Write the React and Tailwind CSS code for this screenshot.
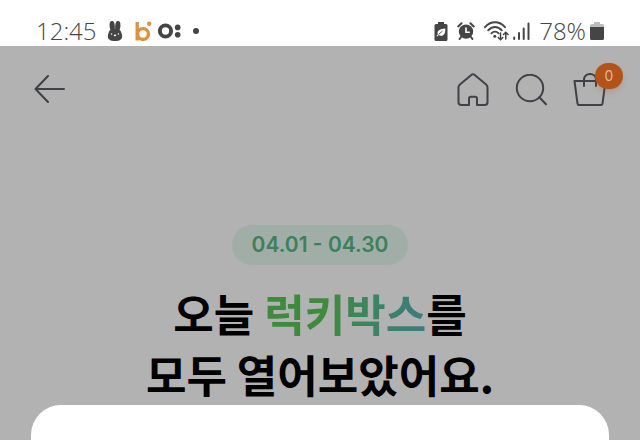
const STROKE = '#3f4145'
const DARK = '#454545'

function RabbitIcon() {
  return (
    <svg width="16" height="20" viewBox="0 0 16 20" fill={DARK} aria-hidden="true">
      <ellipse cx="5.200" cy="5" rx="2.600" ry="5" transform="rotate(-4 5 5)" />
      <ellipse cx="10.800" cy="5" rx="2.600" ry="5" transform="rotate(4 11 5)" />
      <path d="M8 7.500c4 0 6 2 6.400 4.400.3 1 .8 1.700.8 3.300 0 3.200-2.600 4.800-7.200 4.800S.8 18.400.8 15.200c0-1.600.5-2.300.8-3.300C2 9.500 4 7.500 8 7.500Z" />
      <circle cx="4.600" cy="13" r=".7" fill="white" />
      <circle cx="11.400" cy="13" r=".7" fill="white" />
      <ellipse cx="8" cy="14.400" rx="1.200" ry=".8" fill="white" />
    </svg>
  )
}

function BithumbIcon() {
  return (
    <svg width="17" height="20" viewBox="0 0 17 20" fill="none" stroke="#dc9243" aria-hidden="true">
      <path d="M2.200 1v18.500" strokeWidth="3.400" />
      <circle cx="8" cy="13" r="5.400" strokeWidth="3.400" />
      <circle cx="14.200" cy="2.800" r="2.200" fill="#dc9243" stroke="none" />
    </svg>
  )
}

function ColonIcon() {
  return (
    <svg width="23" height="16" viewBox="0 0 23 16" fill={DARK} aria-hidden="true">
      <circle cx="7.500" cy="8" r="5.600" fill="none" stroke={DARK} strokeWidth="3.900" />
      <circle cx="19.700" cy="4.400" r="2.800" />
      <circle cx="19.700" cy="11.800" r="2.800" />
    </svg>
  )
}

function LeafBatteryIcon() {
  return (
    <svg width="14" height="19" viewBox="0 0 14 19" fill={DARK} aria-hidden="true">
      <path d="M4 0h6v2h2a1.500 1.500 0 0 1 1.500 1.500v14A1.500 1.500 0 0 1 12 19H2a1.500 1.500 0 0 1-1.500-1.500v-14A1.500 1.500 0 0 1 2 2h2Z" />
      <path d="M11.300 6.500c.2 4-1 7.300-4.300 7.300-1 0-1.700-.3-2.300-.8l-1.500 1.600-.8-.7 1.500-1.700C2.500 8.700 6 7 11.300 6.500Z" fill="white" />
      <path d="M4.500 12.500 8.500 9" stroke={DARK} strokeWidth=".9" />
    </svg>
  )
}

function AlarmIcon() {
  return (
    <svg width="18" height="18" viewBox="0 0 18 18" fill="none" stroke={DARK} strokeLinecap="round" aria-hidden="true">
      <circle cx="9" cy="9.600" r="7.200" fill={DARK} stroke="none" />
      <path d="M1.200 4.400 4.600 1.200M16.800 4.400 13.400 1.200" strokeWidth="2" />
      <path d="M4 15 2.600 17M14 15l1.400 2" strokeWidth="2" />
      <path d="M9 6v4.300h3.200" stroke="white" strokeWidth="1.600" />
    </svg>
  )
}

function WifiIcon() {
  return (
    <svg width="25" height="20" viewBox="0 0 25 20" fill="none" stroke={DARK} strokeWidth="1.900" strokeLinecap="round" aria-hidden="true">
      <path d="M1 6.200C6.500-.4 15.500-.4 21 6.200" />
      <path d="M4.200 9.300c4-4.400 9.600-4.400 13.600 0" />
      <path d="M7.400 12.300c2.200-2.300 5-2.300 7.200 0" />
      <circle cx="10.800" cy="15.200" r="1.500" fill={DARK} stroke="none" />
      <path d="M16.500 12v6.500M14.200 16.500l2.300 2.300 2.300-2.300" strokeWidth="1.500" />
      <path d="M21.800 18v-6.500M19.500 13.500l2.300-2.300 2.300 2.300" strokeWidth="1.500" />
    </svg>
  )
}

function SignalIcon() {
  return (
    <svg width="17" height="18" viewBox="0 0 17 18" stroke={DARK} strokeWidth="2" strokeLinecap="round" aria-hidden="true">
      <path d="M1.200 15.500V17M6 11v6M10.700 6.500V17M15.500 1.500V17" />
    </svg>
  )
}

function BatteryIcon() {
  return (
    <svg width="14" height="18" viewBox="0 0 14 18" aria-hidden="true">
      <path d="M4 0h6v2h2.500A1.500 1.500 0 0 1 14 3.500V6H0V3.500A1.500 1.500 0 0 1 1.500 2H4Z" fill="#bdbdbd" />
      <path d="M0 5h14v11.500a1.500 1.500 0 0 1-1.500 1.500h-11A1.500 1.500 0 0 1 0 16.500Z" fill={DARK} />
    </svg>
  )
}

function BackIcon() {
  return (
    <svg width="32" height="30" viewBox="0 0 32 30" fill="none" stroke={STROKE} strokeWidth="2" strokeLinecap="round" strokeLinejoin="round" aria-hidden="true">
      <path d="M14 1 1.500 14 14 27M1.500 14H30" />
    </svg>
  )
}

function HomeIcon() {
  return (
    <svg width="32" height="34" viewBox="0 0 32 34" fill="none" stroke={STROKE} strokeWidth="2" strokeLinejoin="round" aria-hidden="true">
      <path d="M14.600 1.800a2.200 2.200 0 0 1 2.800 0l11.700 9.600c.9.800 1.400 1.700 1.400 2.900v14.900a2.800 2.800 0 0 1-2.800 2.800H20v-6.200a2 2 0 0 0-2-2h-4a2 2 0 0 0-2 2V32H4.300a2.800 2.800 0 0 1-2.800-2.800V14.300c0-1.200.5-2.100 1.400-2.900Z" />
    </svg>
  )
}

function SearchIcon() {
  return (
    <svg width="32" height="32" viewBox="0 0 32 32" fill="none" stroke={STROKE} strokeWidth="2" strokeLinecap="round" aria-hidden="true">
      <circle cx="15" cy="14" r="13.200" />
      <path d="m24.300 23.300 6.700 7" />
    </svg>
  )
}

function BagIcon() {
  return (
    <svg width="34" height="34" viewBox="0 0 34 34" fill="none" stroke={STROKE} strokeWidth="2" strokeLinecap="round" strokeLinejoin="round" aria-hidden="true">
      <path d="M1.500 8h31l-3 22.700a1.500 1.500 0 0 1-1.500 1.300H6a1.500 1.500 0 0 1-1.500-1.300Z" />
      <path d="M11 13V6.500C11 3.200 13.700 1 17 1s6 2.200 6 5.500V13" />
    </svg>
  )
}

function StatusBar() {
  return (
    <div className="flex h-[46px] items-center justify-between bg-white px-9 pt-4 font-['Open_Sans',sans-serif] text-2xl leading-none font-light text-[#454545]">
      <div className="flex items-center">
        <span>12:45</span>
        <span className="ml-2.5 flex items-center gap-3">
          <RabbitIcon />
          <BithumbIcon />
        </span>
        <span className="ml-1.5 flex items-center gap-3">
          <ColonIcon />
          <span className="size-1.5 rounded-full bg-[#454545]" />
        </span>
      </div>
      <div className="flex items-center gap-[9px]">
        <LeafBatteryIcon />
        <AlarmIcon />
        <span className="flex items-center gap-1">
          <WifiIcon />
          <SignalIcon />
        </span>
        <span className="flex items-center gap-1">
          <span>78%</span>
          <BatteryIcon />
        </span>
      </div>
    </div>
  )
}

function Header() {
  return (
    <header className="flex h-[88px] items-center justify-between pr-[33px] pl-[34px]">
      <button type="button" aria-label="뒤로">
        <BackIcon />
      </button>
      <nav className="flex items-center gap-[26px]">
        <button type="button" aria-label="홈">
          <HomeIcon />
        </button>
        <button type="button" aria-label="검색">
          <SearchIcon />
        </button>
        <button type="button" aria-label="장바구니" className="relative">
          <BagIcon />
          <span className="absolute -top-2.5 -right-4 flex h-[26px] w-7 items-center justify-center rounded-full bg-[#b35319] font-['Inter',sans-serif] text-sm text-[#d8b9a4] shadow-md shadow-[#b35319]/20">
            0
          </span>
        </button>
      </nav>
    </header>
  )
}

export default function App() {
  return (
    <div className="flex h-screen flex-col overflow-hidden bg-[#b2b2b2]">
      <StatusBar />
      <Header />
      <main className="flex flex-1 flex-col items-center pt-[91px]">
        <p className="flex h-10 shrink-0 items-center rounded-full bg-[#a0aea7] px-5 font-['Inter',sans-serif] text-[21px] font-semibold text-[#3f7f5b]">
          04.01 - 04.30
        </p>
        <h1 className="mt-[18px] text-center font-['Noto_Sans_CJK_KR',sans-serif] text-[44px] leading-[61px] font-bold text-black">
          오늘{' '}
          <span className="bg-linear-to-r from-[#3f8a3f] from-40% to-[#3c7b80] bg-clip-text text-transparent">럭키박스</span>
          를
          <br />
          모두 열어보았어요.
        </h1>
        <div className="w-full flex-1 px-[31px]">
          <section className="h-full rounded-t-[30px] bg-white" />
        </div>
      </main>
    </div>
  )
}
